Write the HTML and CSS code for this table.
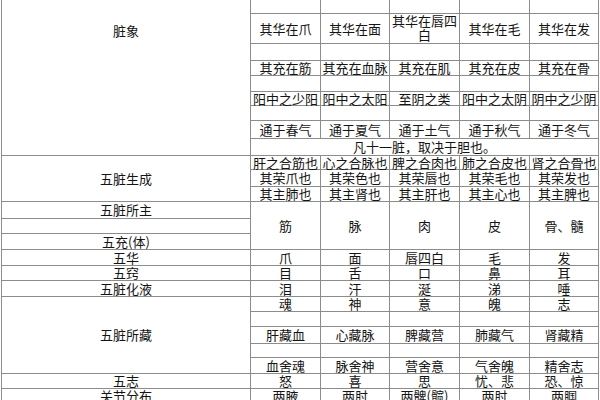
FILE: index.html
```html
<!DOCTYPE html>
<html lang="zh-CN">
<head>
<meta charset="utf-8">
<title>脏象</title>
<link rel="stylesheet" href="styles.css">
</head>
<body>
<table class="grid">
  <colgroup>
    <col class="c-name">
    <col class="c-a">
    <col class="c-b">
    <col class="c-c">
    <col class="c-d">
    <col class="c-e">
  </colgroup>
  <tbody>
    <tr class="h13 cut"><td rowspan="9" class="name-top">脏象</td><td></td><td></td><td></td><td></td><td></td></tr>
    <tr class="h30"><td>其华在爪</td><td>其华在面</td><td class="wrap">其华在唇四白</td><td>其华在毛</td><td>其华在发</td></tr>
    <tr class="h17"><td></td><td></td><td></td><td></td><td></td></tr>
    <tr class="h15"><td>其充在筋</td><td>其充在血脉</td><td>其充在肌</td><td>其充在皮</td><td>其充在骨</td></tr>
    <tr class="h16"><td></td><td></td><td></td><td></td><td></td></tr>
    <tr class="h13"><td>阳中之少阳</td><td>阳中之太阳</td><td>至阴之类</td><td>阳中之太阴</td><td>阴中之少阴</td></tr>
    <tr class="h15"><td></td><td></td><td></td><td></td><td></td></tr>
    <tr class="h18"><td>通于春气</td><td>通于夏气</td><td>通于土气</td><td>通于秋气</td><td>通于冬气</td></tr>
    <tr class="h17"><td colspan="5">凡十一脏，取决于胆也。</td></tr>
    <tr class="h14"><td rowspan="3">五脏生成</td><td>肝之合筋也</td><td>心之合脉也</td><td>脾之合肉也</td><td>肺之合皮也</td><td>肾之合骨也</td></tr>
    <tr class="h17"><td>其荣爪也</td><td>其荣色也</td><td>其荣唇也</td><td>其荣毛也</td><td>其荣发也</td></tr>
    <tr class="h15"><td>其主肺也</td><td>其主肾也</td><td>其主肝也</td><td>其主心也</td><td>其主脾也</td></tr>
    <tr class="h17"><td>五脏所主</td><td rowspan="3">筋</td><td rowspan="3">脉</td><td rowspan="3">肉</td><td rowspan="3">皮</td><td rowspan="3">骨、髓</td></tr>
    <tr class="h15"><td></td></tr>
    <tr class="h16"><td>五充(体)</td></tr>
    <tr class="h16"><td>五华</td><td>爪</td><td>面</td><td>唇四白</td><td>毛</td><td>发</td></tr>
    <tr class="h15"><td>五窍</td><td>目</td><td>舌</td><td>口</td><td>鼻</td><td>耳</td></tr>
    <tr class="h16"><td>五脏化液</td><td>泪</td><td>汗</td><td>涎</td><td>涕</td><td>唾</td></tr>
    <tr class="h15"><td rowspan="5">五脏所藏</td><td>魂</td><td>神</td><td>意</td><td>魄</td><td>志</td></tr>
    <tr class="h15"><td></td><td></td><td></td><td></td><td></td></tr>
    <tr class="h17"><td>肝藏血</td><td>心藏脉</td><td>脾藏营</td><td>肺藏气</td><td>肾藏精</td></tr>
    <tr class="h14"><td></td><td></td><td></td><td></td><td></td></tr>
    <tr class="h16"><td>血舍魂</td><td>脉舍神</td><td>营舍意</td><td>气舍魄</td><td>精舍志</td></tr>
    <tr class="h15"><td>五志</td><td>怒</td><td>喜</td><td>思</td><td>忧、悲</td><td>恐、惊</td></tr>
    <tr class="h15"><td>关节分布</td><td>两腋</td><td>两肘</td><td>两髀(髋)</td><td>两肘</td><td>两腘</td></tr>
  </tbody>
</table>
</body>
</html>
```
FILE: styles.css
```css
html, body {
  margin: 0;
  padding: 0;
  background: #ffffff;
  overflow: hidden;
}

.grid {
  border-collapse: collapse;
  table-layout: fixed;
  width: 597px;
  margin-left: 1px;
  font-family: "Noto Sans CJK SC", "Noto Sans", sans-serif;
  font-size: 13px;
  color: #141414;
}

.c-name { width: 249px; }
.c-a { width: 70px; }
.c-b { width: 69px; }
.c-c { width: 70px; }
.c-d { width: 70px; }
.c-e { width: 69px; }

.grid td {
  border: 1px solid #8c8c8c;
  padding: 0;
  text-align: center;
  vertical-align: middle;
  line-height: 13px;
}

.grid tr.cut td { border-top: none; }

.grid td.name-top {
  vertical-align: top;
  padding-top: 24px;
}

.grid td.wrap { line-height: 14px; }

.h13 { height: 13px; }
.h14 { height: 14px; }
.h15 { height: 15px; }
.h16 { height: 16px; }
.h17 { height: 17px; }
.h18 { height: 18px; }
.h30 { height: 30px; }
```
